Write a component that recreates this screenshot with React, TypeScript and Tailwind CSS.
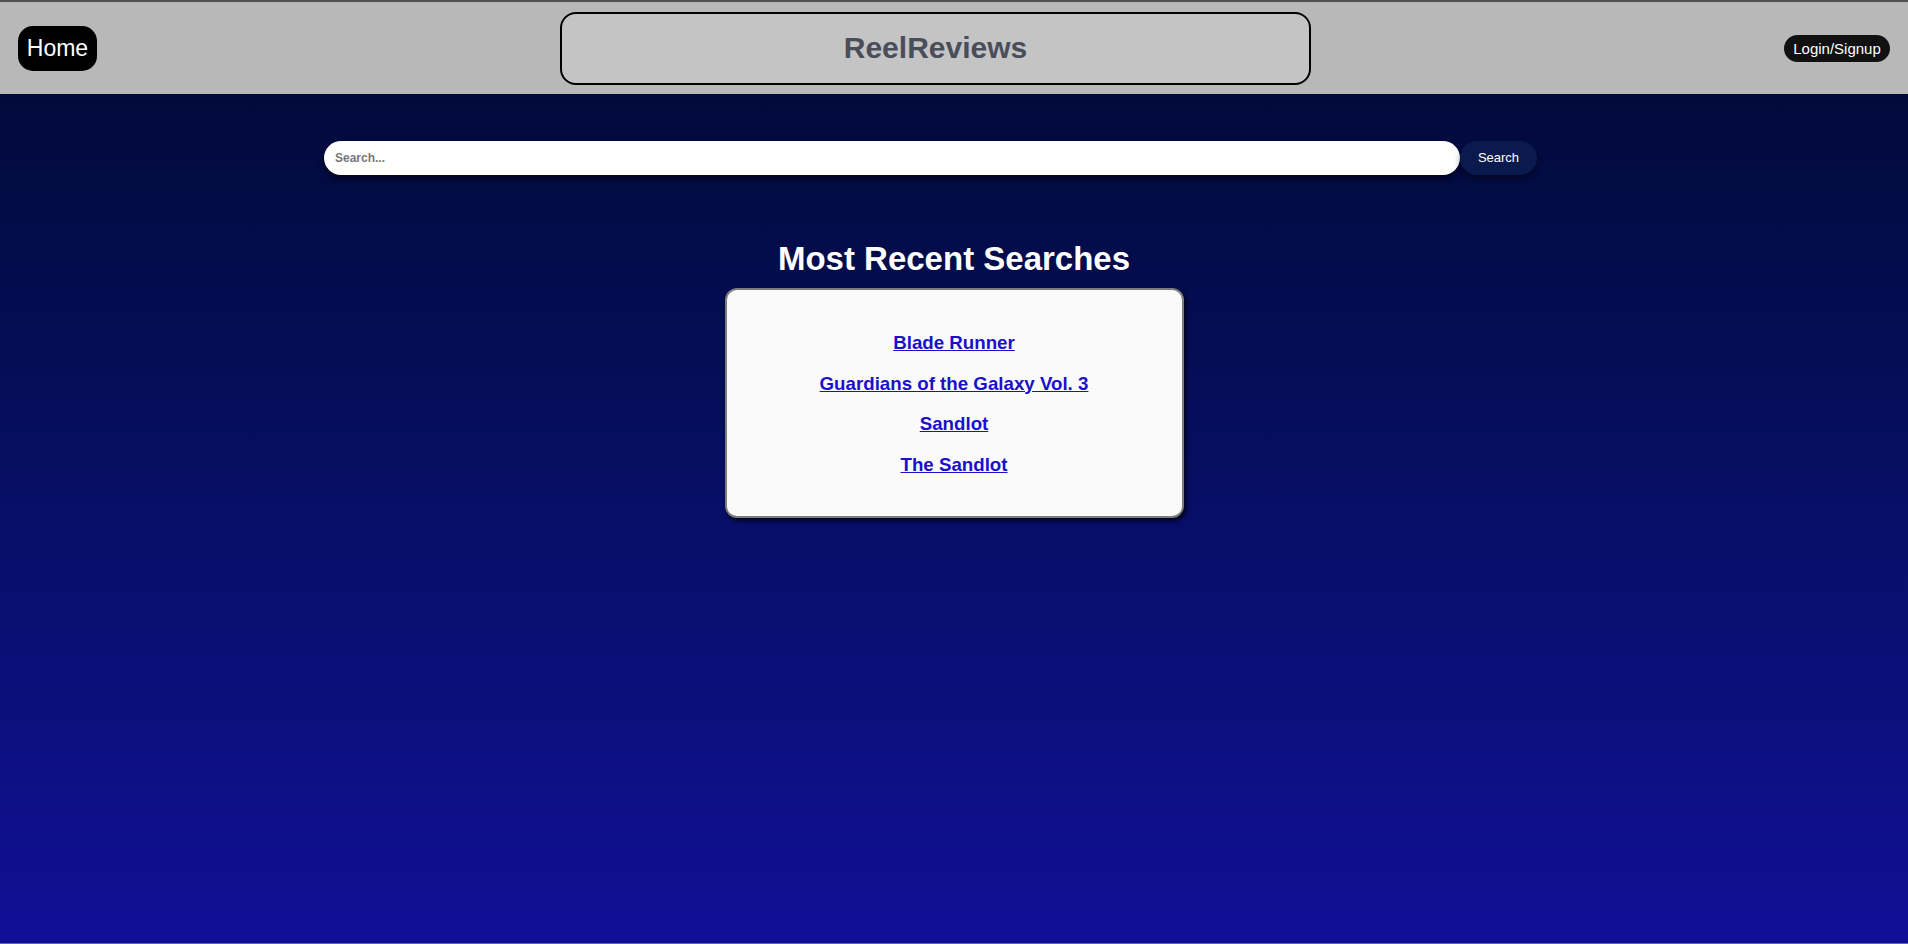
const recent = ['Blade Runner', 'Guardians of the Galaxy Vol. 3', 'Sandlot', 'The Sandlot']

function Header() {
  return (
    <header className="h-[94px] shrink-0 flex items-center px-[18px] bg-[#b8b8b8] border-t-2 border-t-[#505050]">
      <button className="w-[79px] h-[45px] rounded-[15px] bg-black text-white text-[23px] leading-none">
        Home
      </button>
      <div className="ml-[463px] w-[751px] h-[73px] flex items-center justify-center rounded-[16px] border-2 border-black bg-[#c4c4c4]">
        <span className="text-[30px] font-bold text-[#4a4e5a] leading-none">ReelReviews</span>
      </div>
      <button className="ml-auto w-[106px] h-[27px] rounded-full bg-[#111111] text-white text-[15px] leading-none">
        Login/Signup
      </button>
    </header>
  )
}

function SearchBar() {
  return (
    <div className="flex pl-[324px] mt-[47px]">
      <input
        type="text"
        placeholder="Search..."
        className="w-[1136px] h-[34px] rounded-full bg-white pl-[11px] text-[12px] font-bold text-[#333] placeholder:text-[#777] outline-none shadow-[0_4px_6px_rgba(0,0,0,0.55)]"
      />
      <button className="w-[77px] h-[34px] rounded-full bg-[#0b1a4e] text-white text-[13px] shadow-[0_4px_6px_rgba(0,0,0,0.45)]">
        Search
      </button>
    </div>
  )
}

function RecentSearches() {
  return (
    <div className="flex flex-col items-center">
      <h1 className="mt-[65px] text-[33px] leading-[38px] font-bold text-white">Most Recent Searches</h1>
      <div className="mt-[10px] w-[459px] rounded-[12px] border-2 border-[#7d7d7d] bg-[#fafafa] pt-[42px] pb-[41px] flex flex-col items-center gap-[19px] shadow-[2px_3px_4px_rgba(0,0,0,0.75)]">
        {recent.map((title) => (
          <a
            key={title}
            href="#"
            className="text-[18.72px] leading-[21.5px] font-bold text-[#1a0fcc] underline"
          >
            {title}
          </a>
        ))}
      </div>
    </div>
  )
}

export default function App() {
  return (
    <div className="h-[944px] flex flex-col overflow-hidden font-['Liberation_Sans',Arial,sans-serif]">
      <Header />
      <main className="flex-1 bg-linear-to-b from-[#020a3b] to-[#110f97] border-b border-b-[#5f5fae]">
        <SearchBar />
        <RecentSearches />
      </main>
    </div>
  )
}
